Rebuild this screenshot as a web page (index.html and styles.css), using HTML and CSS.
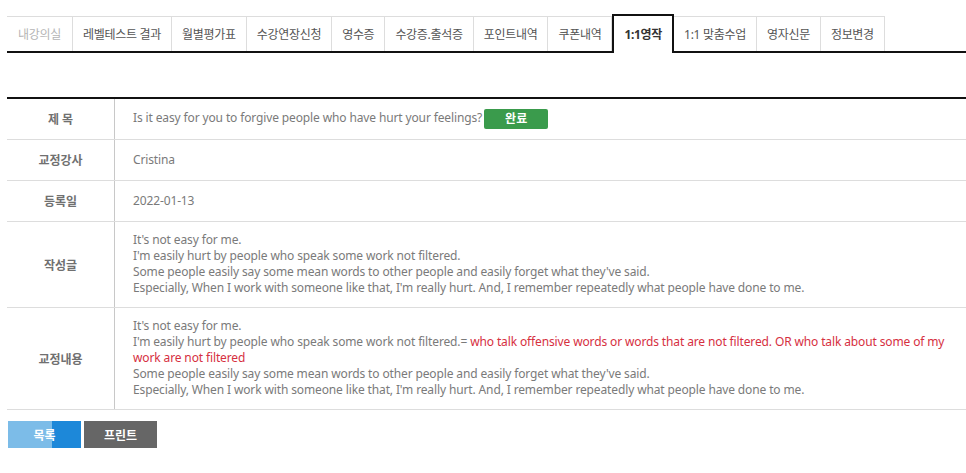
FILE: index.html
```html
<!DOCTYPE html>
<html lang="ko">
<head>
<meta charset="utf-8">
<link rel="stylesheet" href="styles.css">
</head>
<body>
<div class="page">
  <ul class="tabs">
    <li class="tab first">내강의실</li>
    <li class="tab">레벨테스트 결과</li>
    <li class="tab">월별평가표</li>
    <li class="tab">수강연장신청</li>
    <li class="tab">영수증</li>
    <li class="tab">수강증.출석증</li>
    <li class="tab">포인트내역</li>
    <li class="tab">쿠폰내역</li>
    <li class="tab active">1:1영작</li>
    <li class="tab">1:1 맞춤수업</li>
    <li class="tab">영자신문</li>
    <li class="tab">정보변경</li>
  </ul>

  <table class="view">
    <tr>
      <th>제 목</th>
      <td class="title-cell">Is it easy for you to forgive people who have hurt your feelings?<span class="badge">완료</span></td>
    </tr>
    <tr>
      <th>교정강사</th>
      <td>Cristina</td>
    </tr>
    <tr>
      <th>등록일</th>
      <td>2022-01-13</td>
    </tr>
    <tr>
      <th>작성글</th>
      <td class="body">It's not easy for me.<br>I'm easily hurt by people who speak some work not filtered.<br>Some people easily say some mean words to other people and easily forget what they've said.<br>Especially, When I work with someone like that, I'm really hurt. And, I remember repeatedly what people have done to me.</td>
    </tr>
    <tr>
      <th>교정내용</th>
      <td class="body">It's not easy for me.<br>I'm easily hurt by people who speak some work not filtered.= <span class="fix">who talk offensive words or words that are not filtered. OR who talk about some of my work are not filtered</span><br>Some people easily say some mean words to other people and easily forget what they've said.<br>Especially, When I work with someone like that, I'm really hurt. And, I remember repeatedly what people have done to me.</td>
    </tr>
  </table>

  <div class="actions">
    <button class="btn list">목록</button>
    <button class="btn print">프린트</button>
  </div>
</div>
</body>
</html>
```

FILE: styles.css
```css
html, body {
  margin: 0;
  padding: 0;
  background: #fff;
}
body {
  font-family: "Noto Sans", "Noto Sans CJK KR", sans-serif;
  font-size: 12px;
  color: #777;
}
.page {
  padding: 14px 0 0 7px;
}
.tabs {
  list-style: none;
  margin: 0;
  padding: 0;
  display: flex;
  align-items: flex-end;
  border-bottom: 2px solid #111;
  height: 37px;
}
.tab {
  height: 35px;
  box-sizing: border-box;
  border: 1px solid #ddd;
  border-bottom: none;
  border-left: none;
  padding: 0 10px;
  display: flex;
  align-items: center;
  color: #555;
  font-size: 12px;
  letter-spacing: -0.3px;
}
.tab.first {
  color: #b5b5b5;
  padding: 0 11px;
}
.tab.active {
  height: 39px;
  border: 2px solid #111;
  border-bottom: none;
  font-weight: bold;
  color: #333;
  background: #fff;
  margin-bottom: -2px;
  padding: 0 10px 2px;
}
.view {
  margin-top: 44px;
  width: 959px;
  border-collapse: collapse;
  border-top: 2px solid #111;
}
.view th {
  width: 107px;
  font-weight: bold;
  color: #707070;
  font-size: 12px;
  text-align: center;
  border-right: 1px solid #c8c8c8;
  border-bottom: 1px solid #ddd;
  padding: 0;
  height: 40px;
}
.view td {
  padding: 0 10px 0 18px;
  border-bottom: 1px solid #ddd;
  height: 40px;
  color: #7a7a7a;
  line-height: 16px;
  letter-spacing: -0.13px;
}
.view td.body {
  padding-top: 10px;
  padding-bottom: 11px;
  height: auto;
}
.badge {
  display: inline-block;
  background: #3a9b4c;
  color: #fff;
  font-weight: bold;
  width: 64px;
  height: 20px;
  line-height: 20px;
  text-align: center;
  border-radius: 2px;
  margin-left: 2px;
  vertical-align: middle;
  font-size: 12px;
  letter-spacing: 0;
}
.fix {
  color: #d6303f;
}
.actions {
  display: flex;
  gap: 3px;
  margin-top: 11px;
  padding-left: 1px;
}
.btn {
  width: 73px;
  height: 27px;
  border: none;
  color: #fff;
  font-family: "Noto Sans", "Noto Sans CJK KR", sans-serif;
  font-size: 12px;
  font-weight: bold;
  padding: 0;
}
.btn.list {
  background: linear-gradient(to right, #7cbce8 0, #7cbce8 44px, #1d88d9 44px);
}
.btn.print {
  background: #666;
}
```
